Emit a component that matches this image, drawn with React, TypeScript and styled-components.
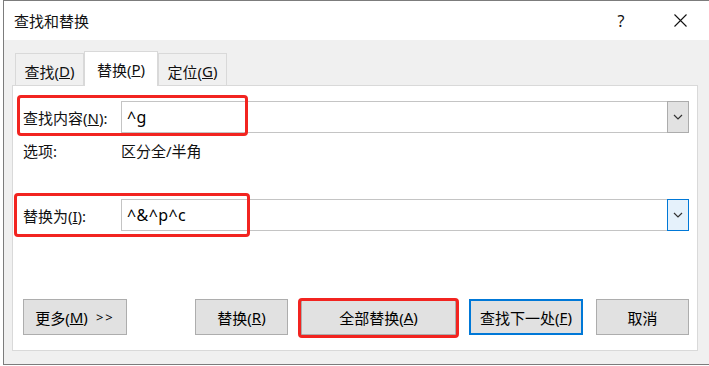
import styled, { createGlobalStyle } from 'styled-components';

const GlobalStyle = createGlobalStyle`
  html, body {
    margin: 0;
    padding: 0;
    background: #fff;
  }
  body {
    font-family: "Noto Sans", "Noto Sans CJK SC", sans-serif;
    color: #111;
  }
`;

const Screen = styled.div`
  width: 709px;
  height: 366px;
  padding-left: 3px;
  box-sizing: border-box;
  overflow: hidden;
`;

const Window = styled.div`
  width: 706px;
  height: 365px;
  box-sizing: border-box;
  border: 1px solid #7c7c7c;
  border-right: none;
  background: #f0f0f0;
  display: flex;
  flex-direction: column;
`;

const TitleBar = styled.div`
  height: 39px;
  flex: none;
  background: #fff;
  display: flex;
  align-items: center;
  padding-left: 10px;
`;

const Title = styled.div`
  font-size: 15px;
  flex: 1;
`;

const Controls = styled.div`
  display: flex;
  gap: 13px;
  padding-right: 6px;
`;

const ControlButton = styled.div`
  width: 46px;
  height: 39px;
  display: flex;
  align-items: center;
  justify-content: center;
  font-size: 16px;
`;

const Body = styled.div`
  flex: 1;
  padding: 11px 0 12px 8px;
  display: flex;
  flex-direction: column;
`;

const TabStrip = styled.div`
  display: flex;
  align-items: flex-end;
  height: 35px;
  padding-left: 3px;
  margin-bottom: -1px;
  position: relative;
  z-index: 1;
`;

const Tab = styled.div<{ $active?: boolean }>`
  box-sizing: border-box;
  width: ${p => (p.$active ? 74 : 69)}px;
  height: ${p => (p.$active ? 35 : 32)}px;
  margin-bottom: ${p => (p.$active ? 0 : 1)}px;
  border: 1px solid #d9d9d9;
  border-bottom: none;
  background: ${p => (p.$active ? '#fff' : '#f0f0f0')};
  display: flex;
  align-items: center;
  justify-content: center;
  padding-top: ${p => (p.$active ? 0 : 3)}px;
  font-size: 15px;
  position: relative;
  z-index: ${p => (p.$active ? 2 : 1)};
`;

const Panel = styled.div`
  width: 686px;
  height: 266px;
  box-sizing: border-box;
  border: 1px solid #d9d9d9;
  background: #fff;
  padding: 15px 8px 15px 10px;
  display: flex;
  flex-direction: column;
`;

const FieldRow = styled.div<{ $gap?: number }>`
  display: flex;
  align-items: center;
  height: 32px;
  position: relative;
  margin-top: ${p => p.$gap ?? 0}px;
`;

const Label = styled.div`
  width: 98px;
  flex: none;
  font-size: 15px;
`;

const Combo = styled.div`
  flex: 1;
  height: 32px;
  display: flex;
`;

const Field = styled.div`
  flex: 1;
  box-sizing: border-box;
  border: 1px solid #c4c4c4;
  border-right: none;
  padding-left: 5px;
  display: flex;
  align-items: center;
  font-size: 16px;
  letter-spacing: 0.4px;
  color: #000;
`;

const DropButton = styled.div<{ $focus?: boolean }>`
  width: 22px;
  box-sizing: border-box;
  border: 1px solid ${p => (p.$focus ? '#0078d7' : '#acacac')};
  background: ${p => (p.$focus ? '#e5f1fb' : '#e2e2e2')};
  display: flex;
  align-items: center;
  justify-content: center;
`;

const OptionsRow = styled.div`
  display: flex;
  align-items: center;
  height: 20px;
  margin-top: 7px;
  font-size: 15px;
`;

const ButtonRow = styled.div`
  margin-top: auto;
  display: flex;
  align-items: center;
  gap: 13px;
  height: 36px;
`;

const Button = styled.div<{ $w: number; $default?: boolean; $push?: boolean }>`
  width: ${p => p.$w}px;
  height: 36px;
  box-sizing: border-box;
  border: ${p => (p.$default ? '2px solid #0078d7' : '1px solid #adadad')};
  background: #e1e1e1;
  display: flex;
  align-items: center;
  justify-content: center;
  font-size: 15px;
  color: #000;
  margin-right: ${p => (p.$push ? 'auto' : '0')};
`;

const Arrows = styled.span`
  margin-left: 8px;
  letter-spacing: 2px;
  font-size: 13px;
`;

const Marked = styled.div`
  position: relative;
`;

const Highlight = styled.div<{ $x: number; $y: number; $w: number; $h: number }>`
  position: absolute;
  left: ${p => p.$x}px;
  top: ${p => p.$y}px;
  width: ${p => p.$w}px;
  height: ${p => p.$h}px;
  box-sizing: border-box;
  border: 3px solid #f22420;
  border-radius: 4px;
  pointer-events: none;
  z-index: 3;
`;

const Chevron = () => (
  <svg width="10" height="6" viewBox="0 0 10 6">
    <path d="M1 1 L5 5 L9 1" fill="none" stroke="#333" strokeWidth="1.2" />
  </svg>
);

const CloseIcon = () => (
  <svg width="13" height="13" viewBox="0 0 13 13">
    <path d="M0.5 0.5 L12.5 12.5 M12.5 0.5 L0.5 12.5" stroke="#111" strokeWidth="1.1" />
  </svg>
);

export default function App() {
  return (
    <>
      <GlobalStyle />
      <Screen>
        <Window>
          <TitleBar>
            <Title>查找和替换</Title>
            <Controls>
              <ControlButton>?</ControlButton>
              <ControlButton>
                <CloseIcon />
              </ControlButton>
            </Controls>
          </TitleBar>
          <Body>
            <TabStrip>
              <Tab>查找(<u>D</u>)</Tab>
              <Tab $active>替换(<u>P</u>)</Tab>
              <Tab>定位(<u>G</u>)</Tab>
            </TabStrip>
            <Panel>
              <FieldRow>
                <Label>查找内容(<u>N</u>):</Label>
                <Combo>
                  <Field>^g</Field>
                  <DropButton>
                    <Chevron />
                  </DropButton>
                </Combo>
                <Highlight $x={-6} $y={-6} $w={231} $h={41} />
              </FieldRow>
              <OptionsRow>
                <Label>选项:</Label>
                <span>区分全/半角</span>
              </OptionsRow>
              <FieldRow $gap={39}>
                <Label>替换为(<u>I</u>):</Label>
                <Combo>
                  <Field>^&amp;^p^c</Field>
                  <DropButton $focus>
                    <Chevron />
                  </DropButton>
                </Combo>
                <Highlight $x={-9} $y={-6} $w={236} $h={44} />
              </FieldRow>
              <ButtonRow>
                <Button $w={104} $push>
                  更多(<u>M</u>)<Arrows>&gt;&gt;</Arrows>
                </Button>
                <Button $w={93}>替换(<u>R</u>)</Button>
                <Marked>
                  <Button $w={155}>全部替换(<u>A</u>)</Button>
                  <Highlight $x={-3} $y={-1} $w={161} $h={40} />
                </Marked>
                <Button $w={114} $default>
                  查找下一处(<u>F</u>)
                </Button>
                <Button $w={93}>取消</Button>
              </ButtonRow>
            </Panel>
          </Body>
        </Window>
      </Screen>
    </>
  );
}
